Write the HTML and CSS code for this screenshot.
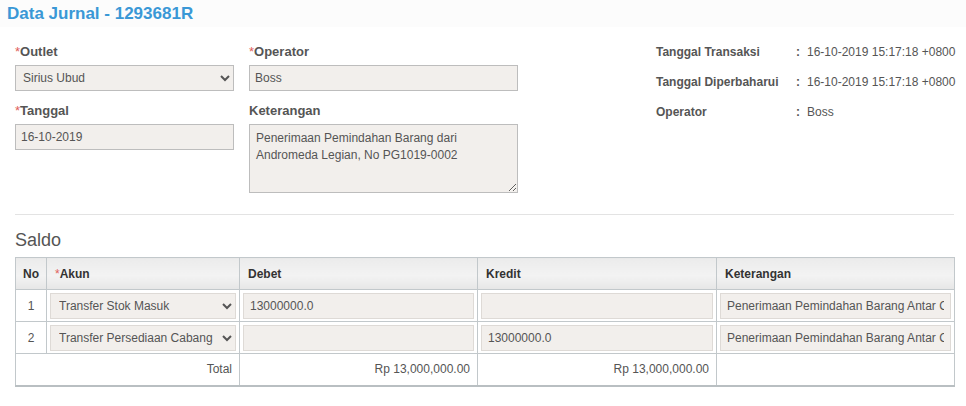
FILE: index.html
```html
<!DOCTYPE html>
<html lang="id">
<head>
<meta charset="utf-8">
<title>Data Jurnal - 1293681R</title>
<link rel="stylesheet" href="styles.css">
</head>
<body>
<div class="page-head">
  <h1 class="title">Data Jurnal - 1293681R</h1>
</div>
<div class="content">
  <div class="top">
    <div class="form-grid">
      <div class="field">
        <label class="lbl"><span class="req">*</span>Outlet</label>
        <select class="ctl ctl-select"><option>Sirius Ubud</option></select>
      </div>
      <div class="field">
        <label class="lbl"><span class="req">*</span>Operator</label>
        <input class="ctl" type="text" value="Boss">
      </div>
      <div class="field">
        <label class="lbl"><span class="req">*</span>Tanggal</label>
        <input class="ctl" type="text" value="16-10-2019">
      </div>
      <div class="field">
        <label class="lbl">Keterangan</label>
        <textarea class="ctl ctl-area">Penerimaan Pemindahan Barang dari Andromeda Legian, No PG1019-0002</textarea>
      </div>
    </div>
    <div class="info">
      <div class="info-row"><span class="info-key">Tanggal Transaksi</span><span class="info-colon">:</span><span class="info-val">16-10-2019 15:17:18 +0800</span></div>
      <div class="info-row"><span class="info-key">Tanggal Diperbaharui</span><span class="info-colon">:</span><span class="info-val">16-10-2019 15:17:18 +0800</span></div>
      <div class="info-row"><span class="info-key">Operator</span><span class="info-colon">:</span><span class="info-val">Boss</span></div>
    </div>
  </div>
  <hr class="divider">
  <h2 class="section">Saldo</h2>
  <table class="grid">
    <colgroup>
      <col class="c-no"><col class="c-akun"><col class="c-debet"><col class="c-kredit"><col class="c-ket">
    </colgroup>
    <thead>
      <tr>
        <th class="center">No</th>
        <th><span class="req">*</span>Akun</th>
        <th>Debet</th>
        <th>Kredit</th>
        <th>Keterangan</th>
      </tr>
    </thead>
    <tbody>
      <tr>
        <td class="center num">1</td>
        <td class="cell"><select class="tctl tctl-select"><option>Transfer Stok Masuk</option></select></td>
        <td class="cell"><input class="tctl" type="text" value="13000000.0"></td>
        <td class="cell"><input class="tctl" type="text" value=""></td>
        <td class="cell"><input class="tctl" type="text" value="Penerimaan Pemindahan Barang Antar Cabang"></td>
      </tr>
      <tr>
        <td class="center num">2</td>
        <td class="cell"><select class="tctl tctl-select"><option>Transfer Persediaan Cabang</option></select></td>
        <td class="cell"><input class="tctl" type="text" value=""></td>
        <td class="cell"><input class="tctl" type="text" value="13000000.0"></td>
        <td class="cell"><input class="tctl" type="text" value="Penerimaan Pemindahan Barang Antar Cabang"></td>
      </tr>
      <tr class="total">
        <td colspan="2" class="right">Total</td>
        <td class="right">Rp 13,000,000.00</td>
        <td class="right">Rp 13,000,000.00</td>
        <td></td>
      </tr>
    </tbody>
  </table>
</div>
</body>
</html>
```

FILE: styles.css
```css
* { box-sizing: border-box; }
html, body {
  margin: 0;
  padding: 0;
  background: #fff;
  font-family: "Liberation Sans", Arial, sans-serif;
  font-size: 12px;
  color: #555;
}
.page-head {
  height: 27px;
  background: #fcfcfc;
  padding: 0 7px;
}
.title {
  margin: 0;
  font-size: 17px;
  line-height: 27px;
  font-weight: bold;
  color: #3a98d6;
}
.content {
  padding: 16px 12px 0 15px;
}
.top {
  display: flex;
  align-items: flex-start;
}
.form-grid {
  display: grid;
  grid-template-columns: 219px 269px;
  column-gap: 15px;
  row-gap: 11px;
  align-items: start;
}
.field {
  display: flex;
  flex-direction: column;
}
.lbl {
  font-size: 13px;
  line-height: 17px;
  font-weight: bold;
  color: #555;
  margin-bottom: 5px;
}
.req { color: #e0605a; font-weight: normal; }
.ctl {
  height: 26px;
  border: 1px solid #bdbdbd;
  background-color: #f2efec;
  color: #555;
  font-family: "Liberation Sans", Arial, sans-serif;
  font-size: 12px;
  padding: 0 5px;
  margin: 0;
  border-radius: 0;
  outline: none;
}
.ctl-select { padding-left: 3px; }
.ctl-area {
  height: 69px;
  padding: 5px 6px;
  line-height: 17px;
  resize: vertical;
}
.info {
  margin-left: 138px;
  margin-top: 1px;
  display: flex;
  flex-direction: column;
  gap: 13px;
}
.info-row {
  display: flex;
  line-height: 17px;
  font-size: 12px;
  white-space: nowrap;
}
.info-key { width: 140px; font-weight: bold; }
.info-colon { width: 11px; font-weight: bold; }
.divider {
  border: 0;
  border-top: 1px solid #e3e3e3;
  margin: 21px 0 0;
}
.section {
  margin: 15px 0 0;
  font-size: 18px;
  line-height: 20px;
  font-weight: normal;
  color: #555;
  height: 27px;
}
.grid {
  width: 939px;
  border-collapse: collapse;
  table-layout: fixed;
  margin-top: 0;
  border-bottom: 2px solid #b9bfc2;
}
.c-no { width: 31px; }
.c-akun { width: 193px; }
.c-debet { width: 238px; }
.c-kredit { width: 239px; }
.c-ket { width: 238px; }
.grid th, .grid td {
  border: 1px solid #c2c8cb;
}
.grid th {
  height: 32px;
  padding: 0 8px;
  text-align: left;
  font-weight: bold;
  color: #333;
  background: linear-gradient(to bottom, #ebebeb 0%, #f3f3f3 55%, #e6e6e6 100%);
}
.grid td {
  height: 32px;
  padding: 0 7px;
  color: #555;
}
.grid td.cell { padding: 3px 3px 2px; }
.grid .center { text-align: center; padding: 0; }
.grid .right { text-align: right; }
.grid .total td { height: 32px; }
.tctl {
  display: block;
  width: 100%;
  height: 26px;
  margin: 0;
  border: 1px solid #dedad6;
  background-color: #f2efec;
  color: #555;
  font-family: "Liberation Sans", Arial, sans-serif;
  font-size: 12px;
  padding: 0 6px;
  border-radius: 0;
  outline: none;
}
.tctl-select { padding-left: 4px; }
```
